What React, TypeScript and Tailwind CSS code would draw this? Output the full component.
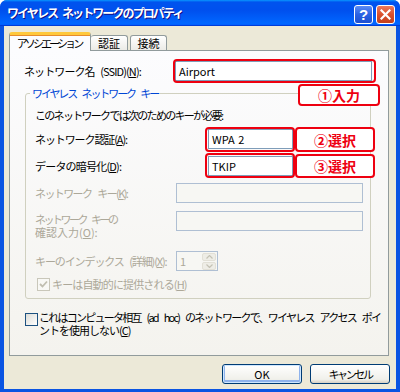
import React from "react";

const U = ({ children }: { children: React.ReactNode }) => <span className="underline">{children}</span>;

function CheckMark({ color }: { color: string }) {
  return (
    <svg width="9" height="9" viewBox="0 0 9 9">
      <path d="M1 4 L3.5 6.5 L8 1.5" fill="none" stroke={color} strokeWidth="1.8" />
    </svg>
  );
}

function RedFrame({ className }: { className: string }) {
  return <div className={"absolute border-2 border-[#EE0010] rounded-[4px] " + className} />;
}

function RedLabel({ className, children }: { className: string; children: React.ReactNode }) {
  return (
    <div
      className={
        "absolute border-2 border-[#EE0010] rounded-[4px] bg-white flex items-center justify-center text-[#EE0010] font-bold text-[14px] leading-[16px] " +
        className
      }
    >
      {children}
    </div>
  );
}

export default function App() {
  return (
    <div className="w-[400px] h-[392px] overflow-hidden font-['Noto_Sans_CJK_JP',sans-serif] text-[11px] leading-[13px] text-black">
      <div className="flex flex-col w-full h-full bg-[#0A54E2] rounded-t-[7px]">
        {/* title bar */}
        <div className="h-[26px] shrink-0 flex items-center pl-[7px] pr-[5px] rounded-t-[7px] bg-[linear-gradient(180deg,#0997ff,#0053ee_8%,#0050ee_40%,#06f_88%,#06f_93%,#005bff_95%,#003dd7_96%,#003dd7)]">
          <span className="text-white font-bold text-[12px] leading-[14px] tracking-[-1.9px] [word-spacing:4px] [text-shadow:1px_1px_#0f1089]">
            ワイヤレス ネットワークのプロパティ
          </span>
          <div className="ml-auto flex gap-[3px] self-start mt-[5px]">
            <div className="w-[19px] h-[19px] rounded-[3px] border border-white bg-[linear-gradient(180deg,#5a8bf5,#2b62e3_50%,#1e50d0)] flex items-center justify-center text-white font-bold text-[15px] leading-[15px] font-['Liberation_Sans',sans-serif]">
              ?
            </div>
            <div className="w-[19px] h-[19px] rounded-[3px] border border-white bg-[linear-gradient(180deg,#ec7a5c,#d9502d_50%,#c2401c)] flex items-center justify-center">
              <svg width="11" height="11" viewBox="0 0 11 11">
                <path d="M1.5 1.5 L9.5 9.5 M9.5 1.5 L1.5 9.5" stroke="white" strokeWidth="2.2" strokeLinecap="square" />
              </svg>
            </div>
          </div>
        </div>

        {/* body */}
        <div className="flex-1 mx-[4px] mb-[3px] bg-[#ECE9D8] pt-[6px] pl-[5px] pr-[7px] flex flex-col">
          {/* tabs */}
          <div className="flex items-end h-[18px]">
            <div className="relative z-10 w-[82px] h-[19px] mb-[-1px] rounded-t-[3px] border-x border-[#919B9C] border-t-[3px] border-t-[#FFC83C] bg-[#FCFCFE] flex items-center justify-center tracking-[-2.9px] shadow-[inset_0_1px_0_#E68B2C]">
              <span className="pr-[2px]">アソシエーション</span>
            </div>
            <div className="w-[37px] h-[15px] rounded-t-[3px] border-t border-r border-[#919B9C] bg-[linear-gradient(180deg,#ffffff,#ecebe6)] flex items-center justify-center">
              認証
            </div>
            <div className="ml-[2px] w-[37px] h-[15px] rounded-t-[3px] border-t border-x border-[#919B9C] bg-[linear-gradient(180deg,#ffffff,#ecebe6)] flex items-center justify-center">
              接続
            </div>
          </div>

          {/* panel */}
          <div className="relative w-[380px] h-[306px] border border-[#919B9C] bg-[linear-gradient(180deg,#fcfcfe,#f4f3ee)]">
            {/* SSID row */}
            <div className="flex items-center h-[20px] mt-[10px]">
              <div className="w-[165px] pl-[14px] tracking-[-0.9px] [word-spacing:4px] whitespace-nowrap">
                ネットワーク名 (SSID)(<U>N</U>):
              </div>
              <div className="w-[197px] h-[20px] border border-[#7F9DB9] bg-white pl-[3px] flex items-center">Airport</div>
            </div>

            {/* group */}
            <fieldset className="ml-[15px] mt-[4px] w-[346px] border border-[#D0D0BF] rounded-[3px] pb-[7px]">
              <legend className="ml-[4px] px-[2px] text-[#0046D5] leading-[16px] tracking-[-2.1px] [word-spacing:5px]">
                ワイヤレス ネットワーク キー
              </legend>
              <div className="mt-[6px] pl-[9px] leading-[16px] tracking-[-1.7px] whitespace-nowrap">
                このネットワークでは次のためのキーが必要:
              </div>
              <div className="mt-[6px] flex items-center h-[20px]">
                <div className="w-[182px] pl-[9px] tracking-[-1.1px] whitespace-nowrap">
                  ネットワーク認証(<U>A</U>):
                </div>
                <div className="w-[85px] h-[20px] border border-[#7F9DB9] bg-white pl-[3px] flex items-center [word-spacing:1px]">WPA 2</div>
              </div>
              <div className="mt-[7px] flex items-center h-[20px]">
                <div className="w-[182px] pl-[9px] tracking-[-0.8px] whitespace-nowrap">
                  データの暗号化(<U>D</U>):
                </div>
                <div className="w-[85px] h-[20px] border border-[#7F9DB9] bg-white pl-[3px] flex items-center">TKIP</div>
              </div>
              <div className="mt-[7px] flex items-center h-[20px] text-[#ACA899]">
                <div className="w-[150px] pl-[9px] tracking-[-1.6px] [word-spacing:5px] whitespace-nowrap">
                  ネットワーク キー(<U>K</U>):
                </div>
                <div className="w-[187px] h-[20px] border border-[#AFBFD3] bg-[#F7F7F3]" />
              </div>
              <div className="mt-[8px] flex items-start text-[#ACA899]">
                <div className="w-[150px] pl-[9px] pt-[2px] leading-[13px] whitespace-nowrap">
                  <div className="tracking-[-2.5px] [word-spacing:5px]">ネットワーク キーの</div>
                  <div>
                    確認入力(<U>O</U>):
                  </div>
                </div>
                <div className="w-[187px] h-[20px] border border-[#AFBFD3] bg-[#F7F7F3]" />
              </div>
              <div className="mt-[12px] flex items-center h-[20px] text-[#ACA899]">
                <div className="w-[150px] pl-[9px] tracking-[-1.1px] [word-spacing:4px] whitespace-nowrap">
                  キーのインデックス (詳細)(<U>X</U>):
                </div>
                <div className="w-[42px] h-[20px] border border-[#AFBFD3] bg-[#F7F7F3] flex items-center pl-[3px] pr-[1px]">
                  <span className="flex-1">1</span>
                  <div className="flex flex-col gap-[1px]">
                    <div className="w-[14px] h-[8px] rounded-[2px] bg-[#EEEDE6] border border-[#E2E0D6] flex items-center justify-center">
                      <svg width="7" height="4" viewBox="0 0 7 4">
                        <path d="M0.5 3.5 L3.5 0.5 L6.5 3.5" fill="none" stroke="#C4C2B4" strokeWidth="1.2" />
                      </svg>
                    </div>
                    <div className="w-[14px] h-[8px] rounded-[2px] bg-[#EEEDE6] border border-[#E2E0D6] flex items-center justify-center">
                      <svg width="7" height="4" viewBox="0 0 7 4">
                        <path d="M0.5 0.5 L3.5 3.5 L6.5 0.5" fill="none" stroke="#C4C2B4" strokeWidth="1.2" />
                      </svg>
                    </div>
                  </div>
                </div>
              </div>
              <div className="mt-[7px] flex items-center h-[13px] pl-[11px] text-[#ACA899]">
                <div className="w-[13px] h-[13px] border border-[#C9C7BA] bg-[#F8F8F5] flex items-center justify-center">
                  <CheckMark color="#C0BEB0" />
                </div>
                <span className="ml-[2px] tracking-[-0.85px] whitespace-nowrap">
                  キーは自動的に提供される(<U>H</U>)
                </span>
              </div>
            </fieldset>

            {/* adhoc checkbox */}
            <div className="mt-[12px] ml-[15px] flex items-start">
              <div className="mt-[2px] w-[13px] h-[13px] border border-[#1C5180] bg-[linear-gradient(135deg,#dcdcd7,#ffffff)]" />
              <div className="ml-[1px] leading-[13px] whitespace-nowrap">
                <div className="tracking-[-1.75px] [word-spacing:5px]">
                  これはコンピュータ相互 (ad hoc) のネットワークで、ワイヤレス アクセス ポイ
                </div>
                <div className="tracking-[-1px]">
                  ントを使用しない(<U>C</U>)
                </div>
              </div>
            </div>

            {/* annotations */}
            <RedFrame className="left-[163px] top-[8px] w-[203px] h-[24px]" />
            <RedLabel className="left-[288px] top-[33px] w-[82px] h-[22px]">①入力</RedLabel>
            <RedFrame className="left-[195px] top-[76px] w-[90px] h-[25px]" />
            <RedLabel className="left-[285px] top-[76px] w-[80px] h-[25px]">②選択</RedLabel>
            <RedFrame className="left-[195px] top-[102px] w-[90px] h-[25px]" />
            <RedLabel className="left-[285px] top-[103px] w-[80px] h-[24px]">③選択</RedLabel>
          </div>

          {/* buttons */}
          <div className="mt-[8px] mr-[-1px] flex justify-end gap-[8px]">
            <div className="w-[80px] h-[20px] rounded-[3px] border border-[#003C74] bg-[linear-gradient(180deg,#ffffff,#f0f0ea_80%,#d6d0c5)] shadow-[inset_0_0_0_1px_#cee7ff,inset_0_-1px_0_2px_#8fb3ec] flex items-center justify-center">
              OK
            </div>
            <div className="w-[80px] h-[20px] rounded-[3px] border border-[#003C74] bg-[linear-gradient(180deg,#ffffff,#f0f0ea_80%,#d6d0c5)] flex items-center justify-center tracking-[-2.4px]">
              キャンセル
            </div>
          </div>
        </div>
      </div>
    </div>
  );
}
